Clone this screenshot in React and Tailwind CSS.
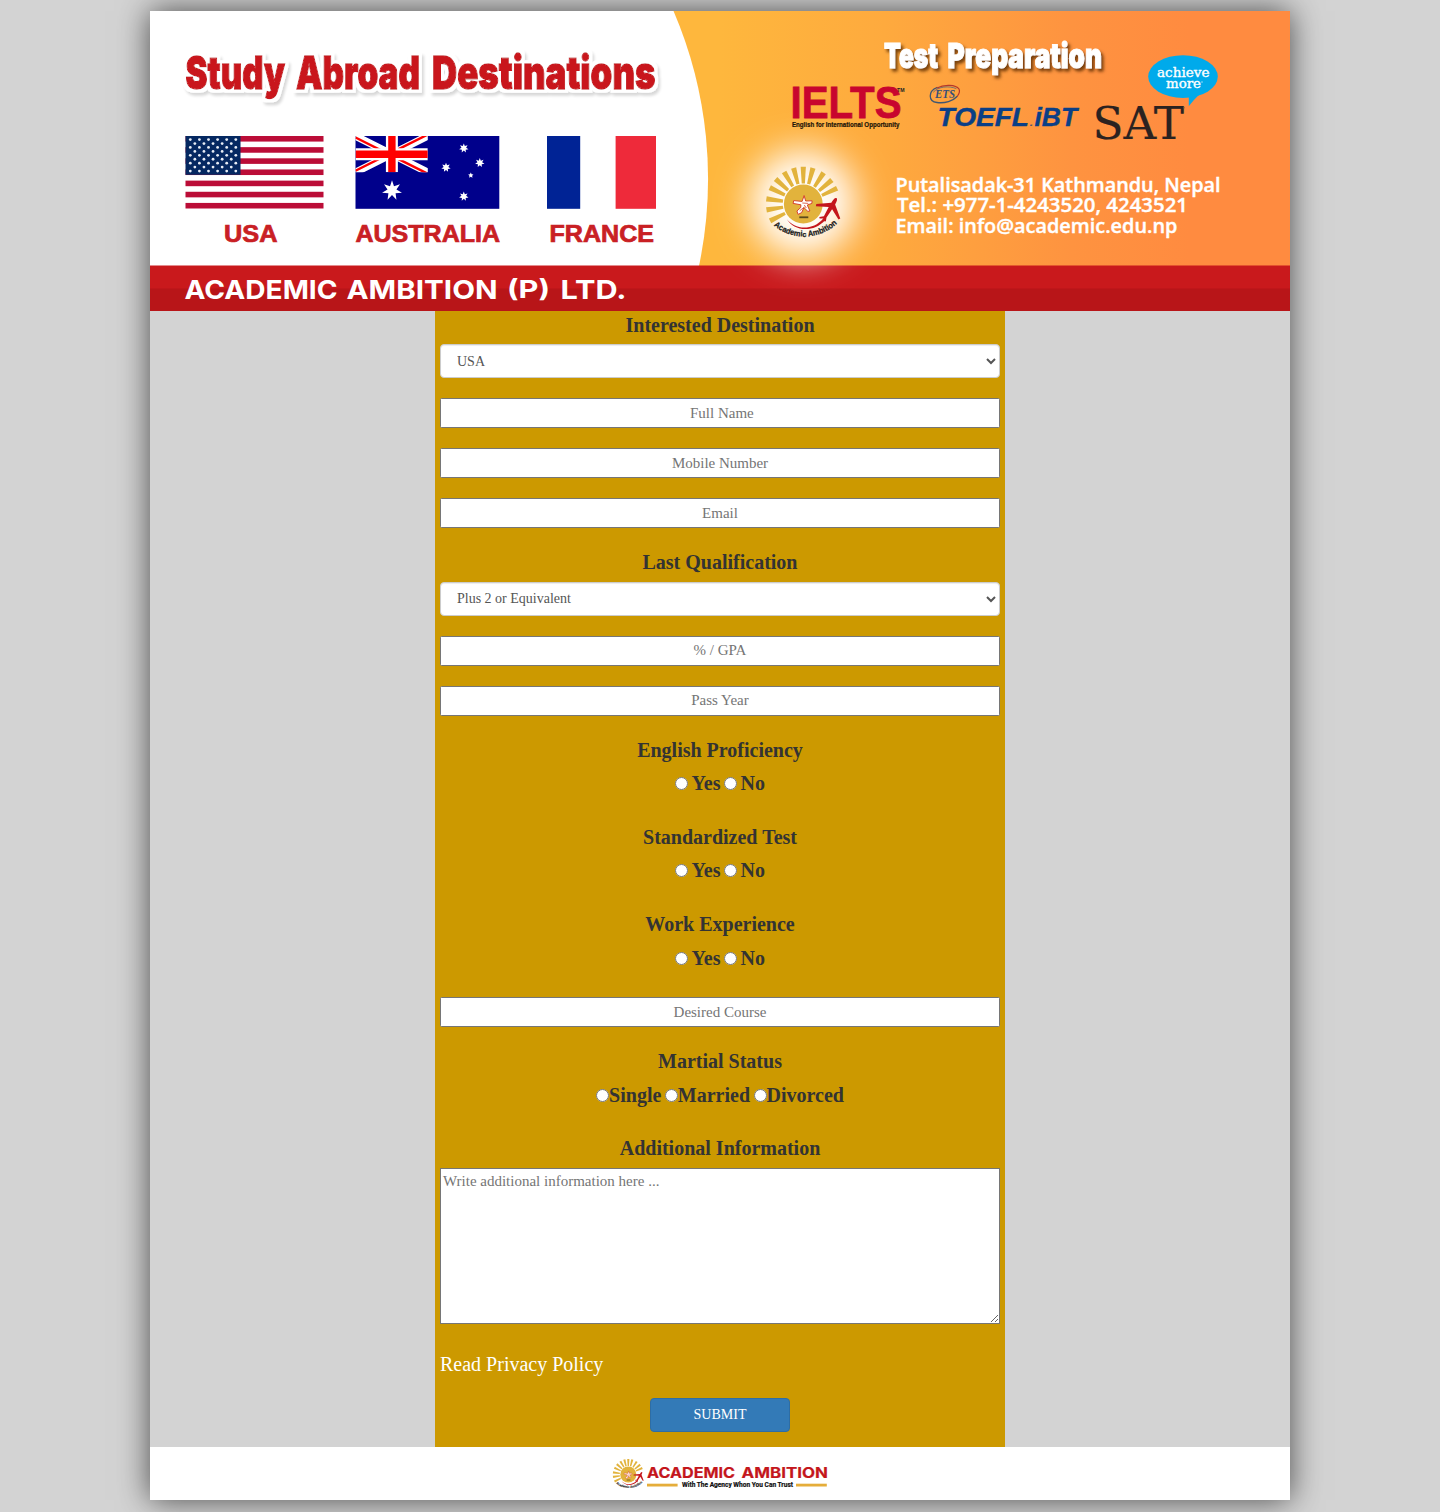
import React from "react";

const SANS = '"Liberation Sans", Arial, sans-serif';
const SERIF = '"Liberation Serif", "Times New Roman", serif';
const INTER = "Inter, sans-serif";

function starPoints(cx, cy, r, inner, n) {
  const pts = [];
  for (let i = 0; i < n * 2; i++) {
    const rad = i % 2 ? r * inner : r;
    const a = (Math.PI * i) / n - Math.PI / 2;
    pts.push((cx + rad * Math.cos(a)).toFixed(2) + "," + (cy + rad * Math.sin(a)).toFixed(2));
  }
  return pts.join(" ");
}

function T({ x, y, w, size, children, font = SANS, weight = 700, ...rest }) {
  return (
    <text
      x={x}
      y={y}
      textLength={w}
      lengthAdjust="spacingAndGlyphs"
      fontSize={size}
      fontWeight={weight}
      fontFamily={font}
      {...rest}
    >
      {children}
    </text>
  );
}

const RAYS = [-117, -99, -82, -64, -48, -31, -15, 0, 15, 33, 50, 65];

/* Sun emblem, centred on the origin */
function Emblem({ id }) {
  return (
    <g>
      {RAYS.map((a) => (
        <path key={a} d="M-1.6 -20.5 L-2.6 -37.3 L2.6 -37.3 L1.6 -20.5Z" fill="#e2b33c" transform={`rotate(${a})`} />
      ))}
      <circle r="19.4" fill="#e2b33c" />
      <path
        d="M0.8 -8.5 L2.4 -3 L8.8 -3.2 L8.6 -0.6 L4 1 L6.6 7 L4.6 7.4 L0.6 3.6 L-1.6 8.6 L-5.2 10.4 L-6.4 7 L-2.6 3.6 L-2.4 0.8 L-10.2 -0.6 L-9.6 -3.4 L-1.2 -2.6Z"
        fill="#fff"
        stroke="#d5452f"
        strokeWidth="1"
      />
      <path d="M-3.6 6.8 L1 3 M-1 -1 L5 -0.6 M1 1 L3 4" stroke="#d5452f" strokeWidth="0.8" />
      <rect x="-4" y="12.4" width="9" height="1.8" fill="#5c4a1c" />
      <path d="M-16.5 15 C-9 25.5 9 27.5 20 14.5 L22 16 C10 29.5 -10 27 -16.5 15Z" fill="#c4161c" />
      <path
        d="M33.2 -6 C31.6 -6.6 29.6 -4.4 28 -1.2 L13 0.1 L12.6 2.3 L25.4 3 L20.6 12.2 L16 13 L16.3 14.4 L19.8 14.6 L21.3 17.6 L22.6 17.2 L23.2 13.6 L28.8 5.2 L35.2 15.6 L37 14.4 L31.8 0.6 C33.6 -2.6 34.4 -5.2 33.2 -6Z"
        fill="#c4161c"
      />
      <path id={id} d="M-29.5 21.6 A48 48 0 0 0 35 18.4" fill="none" />
      <text fontFamily={SANS} fontWeight="700" fontSize="8" fill="#1a1a1a" stroke="#1a1a1a" strokeWidth="0.25">
        <textPath href={"#" + id} textLength="69" lengthAdjust="spacingAndGlyphs">
          Academic Ambition
        </textPath>
      </text>
    </g>
  );
}

function FlagUSA() {
  const h = 72.5 / 13;
  const stars = [];
  for (let r = 0; r < 9; r++) {
    const n = r % 2 ? 5 : 6;
    for (let c = 0; c < n; c++) {
      stars.push([190.3 + (r % 2 ? 4.55 : 0) + c * 9.1, 139.6 + r * 3.93]);
    }
  }
  return (
    <g>
      <rect x="185.5" y="136" width="138" height="72.5" fill="#fff" />
      {[0, 2, 4, 6, 8, 10, 12].map((i) => (
        <rect key={i} x="185.5" y={136 + i * h} width="138" height={h} fill="#bb0d37" />
      ))}
      <rect x="185.5" y="136" width="55" height="38.8" fill="#052861" />
      {stars.map(([x, y], i) => (
        <circle key={i} cx={x} cy={y} r="1.4" fill="#e8edf5" />
      ))}
    </g>
  );
}

function FlagAustralia() {
  return (
    <g>
      <clipPath id="jack">
        <rect x="355.5" y="136" width="72.3" height="36.3" />
      </clipPath>
      <rect x="355.5" y="136" width="143.8" height="72.8" fill="#00008b" />
      <g clipPath="url(#jack)">
        <path d="M355.5 136 L427.8 172.3 M427.8 136 L355.5 172.3" stroke="#fff" strokeWidth="7.4" />
        <path
          d="M355.5 137.5 L391.6 155.6 M427.8 134.5 L391.6 152.6 M391.6 155.6 L427.8 173.8 M391.6 152.6 L355.5 170.8"
          stroke="#f00"
          strokeWidth="2.4"
        />
        <path d="M391.9 136 V172.3 M355.5 154.2 H427.8" stroke="#fff" strokeWidth="12" />
        <path d="M391.9 136 V172.3 M355.5 154.2 H427.8" stroke="#f00" strokeWidth="7.4" />
      </g>
      <g fill="#fff">
        <polygon points={starPoints(392, 190.5, 10.2, 0.45, 7)} />
        <polygon points={starPoints(463.8, 148.2, 4.8, 0.5, 7)} />
        <polygon points={starPoints(446, 167.5, 4.8, 0.5, 7)} />
        <polygon points={starPoints(479.8, 162.8, 4.8, 0.5, 7)} />
        <polygon points={starPoints(470.8, 175.4, 2.8, 0.5, 5)} />
        <polygon points={starPoints(463.8, 196.4, 4.8, 0.5, 7)} />
      </g>
    </g>
  );
}

function Banner() {
  return (
    <svg className="block h-[300px] w-full" viewBox="150 11 1140 300">
      <defs>
        <linearGradient id="sky" gradientUnits="userSpaceOnUse" x1="720" y1="0" x2="1190" y2="0">
          <stop offset="0" stopColor="#feb73d" />
          <stop offset="0.35" stopColor="#feaa3e" />
          <stop offset="0.75" stopColor="#fe9340" />
          <stop offset="1" stopColor="#ff8b40" />
        </linearGradient>
        <filter id="glow" x="-100%" y="-100%" width="300%" height="300%">
          <feGaussianBlur stdDeviation="18" />
        </filter>
        <filter id="brown" x="-10%" y="-30%" width="120%" height="180%">
          <feDropShadow dx="2.5" dy="3" stdDeviation="1.5" floodColor="#5a2c00" floodOpacity="0.8" />
        </filter>
        <filter id="outlined" x="-10%" y="-30%" width="120%" height="180%">
          <feMorphology in="SourceAlpha" operator="dilate" radius="3" result="fat" />
          <feGaussianBlur in="fat" stdDeviation="1.4" />
          <feOffset dx="2" dy="3" />
          <feComponentTransfer result="shade">
            <feFuncA type="linear" slope="0.16" />
          </feComponentTransfer>
          <feFlood floodColor="#fff" />
          <feComposite in2="fat" operator="in" result="rim" />
          <feMerge>
            <feMergeNode in="shade" />
            <feMergeNode in="rim" />
            <feMergeNode in="SourceGraphic" />
          </feMerge>
        </filter>
      </defs>
      <rect x="150" y="11" width="1140" height="255" fill="url(#sky)" />
      <path d="M150 11 H673.5 A425 425 0 0 1 699 266 H150Z" fill="#fff" />
      <rect x="150" y="265.5" width="1140" height="24" fill="#c9191c" />
      <rect x="150" y="288.5" width="1140" height="22.5" fill="#b81518" />
      <circle cx="803" cy="203" r="53" fill="#fff" filter="url(#glow)" />

      <g filter="url(#outlined)" fill="#c9191c" stroke="#c9191c" strokeWidth="1.3">
        <T x={185.5} y={89.3} w={99.5} size={44.8} font={INTER} weight={900}>Study</T>
        <T x={296} y={89.3} w={124} size={44.8} font={INTER} weight={900}>Abroad</T>
        <T x={432} y={89.3} w={223.5} size={44.8} font={INTER} weight={900}>Destinations</T>
      </g>

      <FlagUSA />
      <FlagAustralia />
      <rect x="547" y="136" width="33.2" height="72.8" fill="#002395" />
      <rect x="615.6" y="136" width="40.4" height="72.8" fill="#ee2a3a" />

      <g fill="#c92024" stroke="#c92024" strokeWidth="0.7">
        <T x={224} y={242} w={53.5} size={23}>USA</T>
        <T x={355.5} y={242} w={144.5} size={23}>AUSTRALIA</T>
        <T x={549.5} y={242} w={104.5} size={23}>FRANCE</T>
      </g>
      <g fill="#fff">
        <T x={184.5} y={299.3} w={153} size={26.3} font={INTER} weight={700}>ACADEMIC</T>
        <T x={346.5} y={299.3} w={151} size={26.3} font={INTER} weight={700}>AMBITION</T>
        <T x={507} y={298.3} w={43} size={24.5} font={INTER} weight={700}>(P)</T>
        <T x={560.5} y={299.3} w={66} size={26.3} font={INTER} weight={700}>LTD.</T>
      </g>

      <g filter="url(#brown)" fill="#fff" stroke="#fff" strokeWidth="1">
        <T x={884} y={67.5} w={54} size={34} font={INTER} weight={900}>Test</T>
        <T x={947.5} y={67.5} w={154.5} size={34} font={INTER} weight={900}>Preparation</T>
      </g>

      <T x={790.5} y={118.3} w={111} size={44} fill="#c8052e" stroke="#c8052e" strokeWidth="0.8">IELTS</T>
      <T x={897} y={91.5} w={7.5} size={5} fill="#222">TM</T>
      <T x={792} y={127} w={107.5} size={7.2} fill="#1c1408" stroke="#1c1408" strokeWidth="0.2">
        English for International Opportunity
      </T>

      <g fill="none" strokeLinecap="round">
        <path d="M937 87.5 C928 91 928 101.5 937 102.5 C945 103.5 953 101 957 96.5" stroke="#3f5672" strokeWidth="1.3" />
        <path d="M937 88 C944 84 956 84.5 959 89 C960.2 91.5 959 94 957.5 96" stroke="#b4382c" strokeWidth="1.2" />
        <path d="M933.5 92 C938 86.5 949 85.5 956 88.5" stroke="#5b6474" strokeWidth="0.8" />
      </g>
      <T x={935} y={98.3} w={20} size={11.5} font={SERIF} fill="#35507a" fontStyle="italic">ETS</T>

      <g fill="#0b3f86" fontStyle="italic">
        <T x={937.5} y={126} w={91.5} size={26} stroke="#0b3f86" strokeWidth="0.4">TOEFL</T>
        <T x={1029.5} y={126} w={4} size={9} fillOpacity="0.7">.</T>
        <T x={1034.5} y={126} w={42.5} size={26} stroke="#0b3f86" strokeWidth="0.4">iBT</T>
      </g>

      <T x={1092.5} y={139} w={91.5} size={45} font='"DejaVu Serif", serif' weight={400} fill="#2b2220" stroke="#2b2220" strokeWidth="0.2">
        SAT
      </T>
      <circle cx="1183.8" cy="107.8" r="0.8" fill="#6b4a36" />
      <path d="M1188.8 96 V106.2 C1192 102 1195 98.5 1200 94Z" fill="#00aaeb" />
      <ellipse cx="1183" cy="76.6" rx="34.8" ry="21.4" fill="#00aaeb" />
      <g fill="#fff" stroke="#fff" strokeWidth="0.35">
        <T x={1157} y={77} w={52.5} size={12} font='"DejaVu Serif", serif' weight={400}>achieve</T>
        <T x={1166} y={88} w={35} size={12} font='"DejaVu Serif", serif' weight={400}>more</T>
        <circle cx="1202" cy="82" r="0.4" />
      </g>

      <g fill="#fff" stroke="#fff" strokeWidth="0.4">
        <T x={895.5} y={192} w={325} size={20.3} font='"Open Sans", sans-serif' weight={600}>
          Putalisadak-31 Kathmandu, Nepal
        </T>
        <T x={897} y={212} w={291} size={20.3} font='"Open Sans", sans-serif' weight={600}>
          Tel.: +977-1-4243520, 4243521
        </T>
        <T x={895.5} y={232.5} w={282} size={20.3} font='"Open Sans", sans-serif' weight={600}>
          Email: info@academic.edu.np
        </T>
      </g>

      <g transform="translate(803.3 204)">
        <Emblem id="arc-top" />
      </g>
    </svg>
  );
}

function FooterLogo() {
  return (
    <svg className="block h-[36px] w-[220px]" viewBox="610 1456 220 36">
      <g transform="translate(628.3 1474.5) scale(0.415)">
        <Emblem id="arc-foot" />
      </g>
      <g fill="#c4161c" stroke="#c4161c" strokeWidth="0.2">
        <T x={647} y={1478} w={88} size={15} font={INTER} weight={700}>ACADEMIC</T>
        <T x={741.5} y={1478} w={86.5} size={15} font={INTER} weight={700}>AMBITION</T>
      </g>
      <rect x="647" y="1483.7" width="30.6" height="2.8" fill="#e5ad3a" />
      <rect x="796" y="1483.7" width="30.8" height="2.8" fill="#e5ad3a" />
      <T x={682} y={1487} w={111} size={7.2} font="Roboto, sans-serif" fill="#111" stroke="#111" strokeWidth="0.2">
        With The Agency Whon You Can Trust
      </T>
    </svg>
  );
}

function Heading({ children }) {
  return <div className="h-[33.57px] text-center text-[20px] leading-[28.57px] font-bold">{children}</div>;
}

function Field({ placeholder }) {
  return (
    <input
      placeholder={placeholder}
      className="mb-5 block h-[30px] w-full rounded-[1.5px] border border-[#767676] bg-white px-[2px] text-center text-[15px] text-black placeholder:text-[#757575]"
    />
  );
}

function Select({ options }) {
  return (
    <select className="mb-5 block h-[34px] w-full rounded-[4px] border border-[#ccc] bg-white px-3 py-[6px] text-[14px] leading-[20px] text-[#555] shadow-[inset_0_1px_1px_rgba(0,0,0,0.075)]">
      {options.map((o) => (
        <option key={o}>{o}</option>
      ))}
    </select>
  );
}

function Radios({ name, options, spaced }) {
  return (
    <div className="mb-5 h-[33.57px] text-center text-[14px] leading-[20px]">
      {options.map((o, i) => (
        <React.Fragment key={o}>
          {i > 0 && " "}
          <input type="radio" name={name} className="mt-1 h-[13px] w-[13px] align-baseline" />
          {spaced && " "}
          <label className="mb-[5px] inline-block text-[20px] leading-[28.57px] font-bold">{o}</label>
        </React.Fragment>
      ))}
    </div>
  );
}

export default function App() {
  return (
    <div className="flex min-h-[1512px] justify-center overflow-hidden bg-[#d3d3d3] pt-[11px] pb-3 font-['Liberation_Serif',serif] text-[#333]">
      <div className="flex w-[1140px] flex-col bg-[#d3d3d3] shadow-[0_0_30px_rgba(0,0,0,0.65)]">
        <Banner />
        <form className="mx-auto h-[1136px] w-[570px] bg-[#c90] px-[5px]" onSubmit={(e) => e.preventDefault()}>
          <div className="flow-root">
            <div className="-mt-[0.45px]">
              <Heading>Interested Destination</Heading>
            </div>
            <Select options={["USA", "Australia", "France"]} />
            <Field placeholder=" Full Name" />
            <Field placeholder="Mobile Number" />
            <Field placeholder="Email" />
            <Heading>Last Qualification</Heading>
            <Select options={["Plus 2 or Equivalent", "Bachelor", "Master"]} />
            <Field placeholder="% / GPA" />
            <Field placeholder="Pass Year" />
            <Heading>English Proficiency</Heading>
            <Radios name="english" options={["Yes", "No"]} spaced />
            <Heading>Standardized Test</Heading>
            <Radios name="test" options={["Yes", "No"]} spaced />
            <Heading>Work Experience</Heading>
            <Radios name="work" options={["Yes", "No"]} spaced />
            <Field placeholder="Desired Course" />
            <Heading>Martial Status</Heading>
            <Radios name="status" options={["Single", "Married", "Divorced"]} />
            <Heading>Additional Information</Heading>
            <textarea
              placeholder="Write additional information here ..."
              className="block h-[156px] w-full resize rounded-none border border-[#767676] bg-white p-[2px] text-[15px] leading-[21.4px] text-black placeholder:text-[#757575]"
            />
            <a href="#" className="mt-[26.2px] block text-[20px] leading-[28.57px] text-white">
              Read Privacy Policy
            </a>
            <button className="mx-auto mt-[19.2px] block h-[34px] w-[140px] rounded-[4px] border border-[#2e6da4] bg-[#337ab7] text-[14px] leading-[20px] text-white">
              SUBMIT
            </button>
          </div>
        </form>
        <footer className="flex h-[53px] justify-center bg-white pt-[9px]">
          <FooterLogo />
        </footer>
      </div>
    </div>
  );
}
